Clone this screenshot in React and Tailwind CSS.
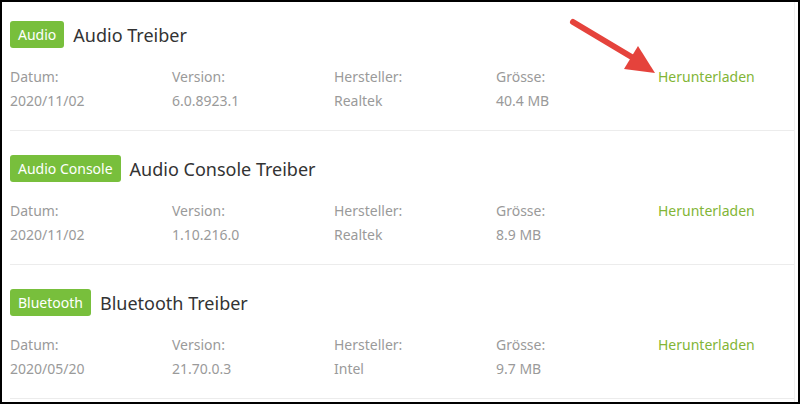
import React from 'react';

const drivers = [
  { tag: 'Audio', name: 'Audio Treiber', date: '2020/11/02', version: '6.0.8923.1', vendor: 'Realtek', size: '40.4 MB' },
  { tag: 'Audio Console', name: 'Audio Console Treiber', date: '2020/11/02', version: '1.10.216.0', vendor: 'Realtek', size: '8.9 MB' },
  { tag: 'Bluetooth', name: 'Bluetooth Treiber', date: '2020/05/20', version: '21.70.0.3', vendor: 'Intel', size: '9.7 MB' },
];

const DriverRow = ({ d, first }) => (
  <div className={`${first ? 'pt-[19px]' : 'pt-[24px]'} pb-[17px] border-b border-[#ececec]`}>
    <div className="flex items-center gap-[9px] h-[27px]">
      <span className="h-[27px] px-[8px] flex items-center rounded-[3px] bg-[#78bf3c] text-white text-[14px]">
        {d.tag}
      </span>
      <span className="text-[18px] text-[#333] leading-none">{d.name}</span>
    </div>
    <div className="mt-[17px] grid grid-cols-[162px_162px_162px_162px_1fr] text-[14px] leading-[24px] text-[#9a9a9a]">
      <div>
        <div>Datum:</div>
        <div>{d.date}</div>
      </div>
      <div>
        <div>Version:</div>
        <div>{d.version}</div>
      </div>
      <div>
        <div>Hersteller:</div>
        <div>{d.vendor}</div>
      </div>
      <div>
        <div>Grösse:</div>
        <div>{d.size}</div>
      </div>
      <div>
        <a className="text-[#82b536]">Herunterladen</a>
      </div>
    </div>
  </div>
);

export default function App() {
  return (
    <div
      className="relative w-[800px] h-[404px] bg-white border-2 border-black overflow-hidden"
      style={{ fontFamily: '"Noto Sans", "Open Sans", sans-serif' }}
    >
      <div className="w-[793px] h-full pl-[8px] border-r border-[#f0f0f0]">
        {drivers.map((d, i) => (
          <DriverRow key={d.name} d={d} first={i === 0} />
        ))}
      </div>

      {/* red annotation arrow */}
      <svg className="absolute left-[560px] top-[10px]" width="110" height="70" viewBox="0 0 110 70">
        <line x1="11" y1="10" x2="78" y2="50" stroke="#e5433c" strokeWidth="6" strokeLinecap="round" />
        <polygon points="93,61 62,57 76,34" fill="#e5433c" />
      </svg>
    </div>
  );
}
